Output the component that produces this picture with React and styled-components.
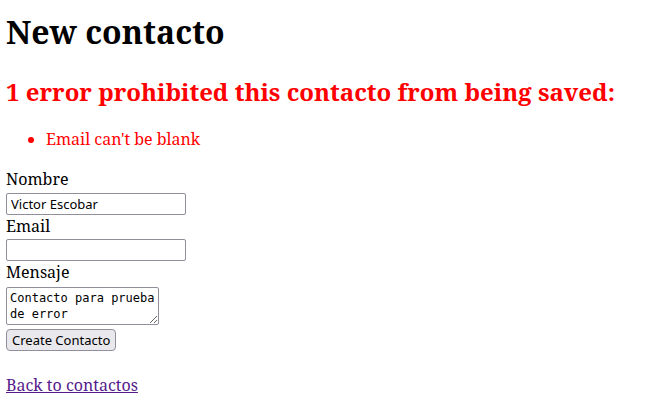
import React from "react";
import styled, { createGlobalStyle } from "styled-components";

const Global = createGlobalStyle`
  body {
    margin: 10px 6px 0;
    font-family: "Noto Serif", "DejaVu Serif", serif;
    font-size: 16px;
    background: #fff;
    color: #000;
  }
`;

const Title = styled.h1`
  font-size: 32px;
  margin: 0 0 21.5px;
  font-weight: bold;
`;

const ErrorBox = styled.div`
  color: red;
`;

const ErrorTitle = styled.h2`
  font-size: 24px;
  margin: 0 0 20.5px;
  font-weight: bold;
`;

const ErrorList = styled.ul`
  margin: 0 0 18px;
  padding-left: 40px;
`;

const Field = styled.div``;

const Label = styled.label`
  display: block;
`;

const TextInput = styled.input`
  display: block;
  box-sizing: border-box;
  width: 180px;
  height: 22px;
  margin: 2.5px 0 0;
  border: 1px solid #8f8f9d;
  border-radius: 2px;
  padding: 1px 4px;
  font: 13px "Noto Sans", "Open Sans", sans-serif;
  color: #000;
  background: #fff;
`;

const TextArea = styled.textarea`
  display: block;
  box-sizing: border-box;
  width: 153px;
  height: 38px;
  margin: 3.5px 0 0;
  border: 1px solid #8f8f9d;
  border-radius: 2px;
  padding: 2px 3px;
  font: 12px/16px "DejaVu Sans Mono", monospace;
  color: #000;
  background: #fff;
  resize: both;
`;

const Actions = styled.div`
  margin-top: 4px;
`;

const SubmitButton = styled.button`
  display: block;
  box-sizing: border-box;
  height: 22px;
  padding: 0 5px;
  border: 1px solid #8f8f9d;
  border-radius: 4px;
  background: #e9e9ed;
  font: 13px "Noto Sans", "Open Sans", sans-serif;
  color: #000;
`;

const Footer = styled.div`
  margin-top: 23.5px;
`;

const BackLink = styled.a`
  color: #551a8b;
  text-decoration: underline;
`;

export default function App() {
  return (
    <>
      <Global />
      <Title>New contacto</Title>
      <form onSubmit={(e) => e.preventDefault()}>
        <ErrorBox>
          <ErrorTitle>1 error prohibited this contacto from being saved:</ErrorTitle>
          <ErrorList>
            <li>Email can't be blank</li>
          </ErrorList>
        </ErrorBox>
        <Field>
          <Label htmlFor="nombre">Nombre</Label>
          <TextInput type="text" id="nombre" defaultValue="Victor Escobar" />
        </Field>
        <Field>
          <Label htmlFor="email">Email</Label>
          <TextInput type="text" id="email" defaultValue="" />
        </Field>
        <Field>
          <Label htmlFor="mensaje">Mensaje</Label>
          <TextArea id="mensaje" defaultValue={"Contacto para prueba de error"} />
        </Field>
        <Actions>
          <SubmitButton type="submit">Create Contacto</SubmitButton>
        </Actions>
      </form>
      <Footer>
        <BackLink href="#">Back to contactos</BackLink>
      </Footer>
    </>
  );
}
